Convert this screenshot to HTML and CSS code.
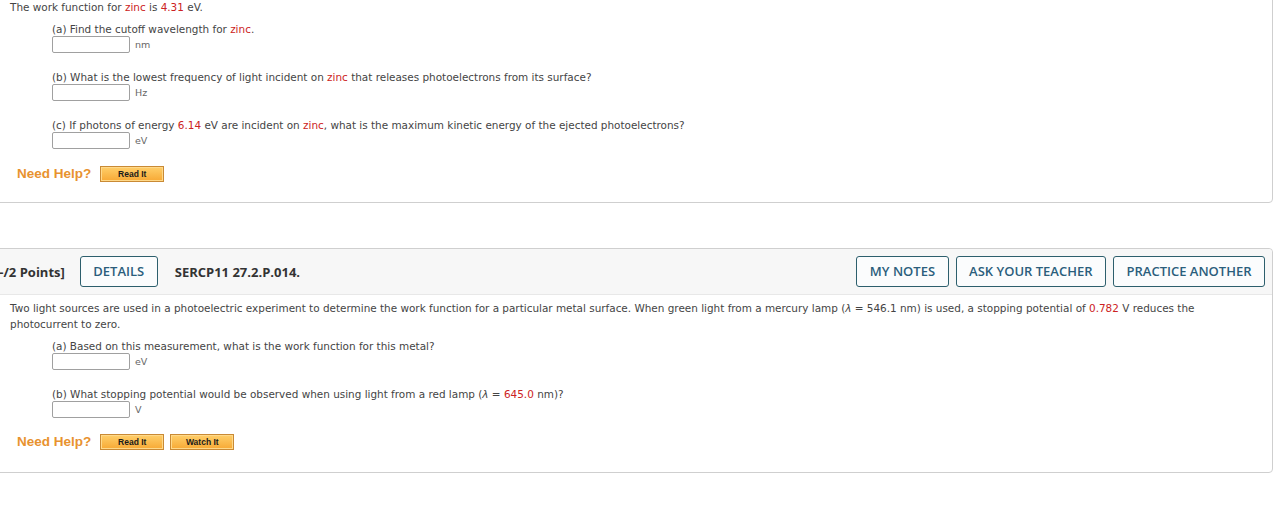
FILE: index.html
```html
<!DOCTYPE html>
<html>
<head>
<meta charset="utf-8">
<link rel="stylesheet" href="styles.css">
</head>
<body>
<div class="card card-first">
  <div class="body">
    <p class="intro">The work function for <span class="val">zinc</span> is <span class="val">4.31</span> eV.</p>
    <div class="part">
      <div class="label">(a) Find the cutoff wavelength for <span class="val">zinc</span>.</div>
      <div class="answer"><span class="box"></span><span class="unit">nm</span></div>
    </div>
    <div class="part">
      <div class="label">(b) What is the lowest frequency of light incident on <span class="val">zinc</span> that releases photoelectrons from its surface?</div>
      <div class="answer"><span class="box"></span><span class="unit">Hz</span></div>
    </div>
    <div class="part">
      <div class="label">(c) If photons of energy <span class="val">6.14</span> eV are incident on <span class="val">zinc</span>, what is the maximum kinetic energy of the ejected photoelectrons?</div>
      <div class="answer"><span class="box"></span><span class="unit">eV</span></div>
    </div>
    <div class="help">
      <span class="help-text">Need Help?</span>
      <span class="help-btn">Read It</span>
    </div>
  </div>
</div>

<div class="card card-second">
  <div class="header">
    <span class="points">[-/2 Points]</span>
    <span class="btn details">DETAILS</span>
    <span class="code">SERCP11 27.2.P.014.</span>
    <span class="spacer"></span>
    <span class="btn">MY NOTES</span>
    <span class="btn">ASK YOUR TEACHER</span>
    <span class="btn">PRACTICE ANOTHER</span>
  </div>
  <div class="body">
    <p class="intro">Two light sources are used in a photoelectric experiment to determine the work function for a particular metal surface. When green light from a mercury lamp (<i>λ</i> = 546.1 nm) is used, a stopping potential of <span class="val">0.782</span> V reduces the photocurrent to zero.</p>
    <div class="part">
      <div class="label">(a) Based on this measurement, what is the work function for this metal?</div>
      <div class="answer"><span class="box"></span><span class="unit">eV</span></div>
    </div>
    <div class="part">
      <div class="label">(b) What stopping potential would be observed when using light from a red lamp (<i>λ</i> = <span class="val">645.0</span> nm)?</div>
      <div class="answer"><span class="box"></span><span class="unit">V</span></div>
    </div>
    <div class="help">
      <span class="help-text">Need Help?</span>
      <span class="help-btn">Read It</span>
      <span class="help-btn">Watch It</span>
    </div>
  </div>
</div>
</body>
</html>
```

FILE: styles.css
```css
html, body {
  margin: 0;
  padding: 0;
  background: #ffffff;
}

body {
  font-family: "DejaVu Sans", Verdana, sans-serif;
  font-size: 10.45px;
  color: #444444;
  overflow: hidden;
}

.card {
  margin-left: -10px;
  margin-right: 3px;
  border: 1px solid #cfcfcf;
  border-radius: 4px;
  background: #ffffff;
}

.card-first {
  margin-top: -20px;
}

.card-second {
  margin-top: 45px;
}

.body {
  padding: 5px 0 22px 19px;
}

.card-first .body {
  padding-top: 18px;
  padding-bottom: 20px;
}

.intro {
  margin: 0;
  line-height: 16px;
  width: 1210px;
}

.val {
  color: #cc2222;
}

.part {
  margin-left: 42px;
  margin-top: 7px;
}

.part + .part {
  margin-top: 16px;
}

.label {
  line-height: 14px;
}

.answer {
  height: 18px;
  display: flex;
  align-items: flex-start;
}

.box {
  width: 76px;
  height: 15px;
  border: 1px solid #a0a0a0;
  border-radius: 2px;
  background: #ffffff;
}

.unit {
  margin-left: 5px;
  line-height: 17px;
  color: #666666;
  font-size: 9.5px;
}

.help {
  display: flex;
  align-items: center;
  height: 17px;
  margin-top: 14px;
  padding-left: 7px;
  gap: 6px;
}

.card-first .help {
  margin-top: 15px;
}

.help-text {
  font-family: "Liberation Sans", Arial, sans-serif;
  font-weight: bold;
  font-size: 13.5px;
  color: #e8922f;
  margin-right: 3px;
}

.help-btn {
  width: 62px;
  height: 14px;
  border: 1px solid #c98a35;
  background: linear-gradient(#ffcf6a, #f7a935);
  box-shadow: inset 0 0 0 1px #ffd98a;
  font-family: "Liberation Sans", Arial, sans-serif;
  font-weight: bold;
  font-size: 8.5px;
  color: #1a1a1a;
  text-align: center;
  line-height: 14px;
}

.header {
  display: flex;
  align-items: center;
  padding: 7px 7px 7px 4px;
  background: #f7f7f7;
  border-bottom: 1px solid #e8e8e8;
  border-radius: 4px 4px 0 0;
  font-family: "Open Sans", "Liberation Sans", sans-serif;
  font-size: 13px;
}

.points {
  font-weight: bold;
  color: #333333;
}

.code {
  font-weight: bold;
  color: #333333;
  margin-left: 17px;
}

.spacer {
  flex: 1;
}

.btn {
  border: 1px solid #2d5f6d;
  border-radius: 3px;
  padding: 6px 12.5px;
  line-height: 17px;
  color: #2b5e7c;
  font-weight: 600;
  background: #fbfcfd;
  margin-left: 7px;
}

.btn.details {
  margin-left: 15px;
}
```
